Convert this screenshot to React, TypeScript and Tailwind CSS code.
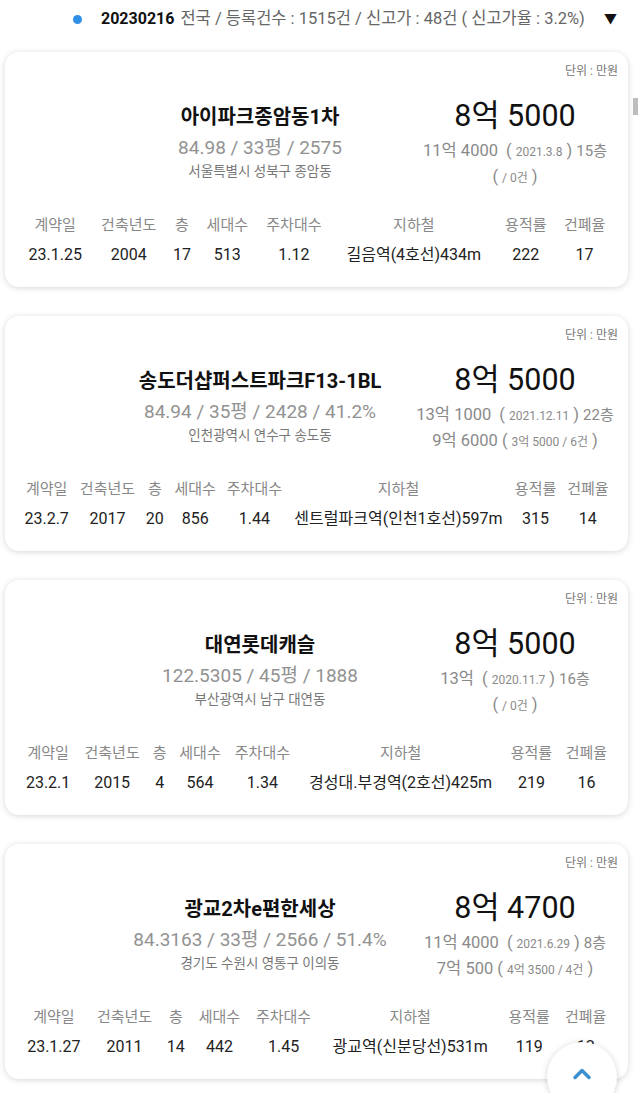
import { ChevronUp } from 'lucide-react';

type Deal = {
  name: string;
  spec: string;
  address: string;
  price: string;
  high: string;
  highDate: string;
  highFloor: string;
  low: string;
  lowNote: string;
  row: string[];
};

const DEALS: Deal[] = [
  {
    name: '아이파크종암동1차',
    spec: '84.98 / 33평 / 2575',
    address: '서울특별시 성북구 종암동',
    price: '8억 5000',
    high: '11억 4000',
    highDate: '2021.3.8',
    highFloor: '15층',
    low: '',
    lowNote: '/ 0건',
    row: ['23.1.25', '2004', '17', '513', '1.12', '길음역(4호선)434m', '222', '17'],
  },
  {
    name: '송도더샵퍼스트파크F13-1BL',
    spec: '84.94 / 35평 / 2428 / 41.2%',
    address: '인천광역시 연수구 송도동',
    price: '8억 5000',
    high: '13억 1000',
    highDate: '2021.12.11',
    highFloor: '22층',
    low: '9억 6000',
    lowNote: '3억 5000 / 6건',
    row: ['23.2.7', '2017', '20', '856', '1.44', '센트럴파크역(인천1호선)597m', '315', '14'],
  },
  {
    name: '대연롯데캐슬',
    spec: '122.5305 / 45평 / 1888',
    address: '부산광역시 남구 대연동',
    price: '8억 5000',
    high: '13억',
    highDate: '2020.11.7',
    highFloor: '16층',
    low: '',
    lowNote: '/ 0건',
    row: ['23.2.1', '2015', '4', '564', '1.34', '경성대.부경역(2호선)425m', '219', '16'],
  },
  {
    name: '광교2차e편한세상',
    spec: '84.3163 / 33평 / 2566 / 51.4%',
    address: '경기도 수원시 영통구 이의동',
    price: '8억 4700',
    high: '11억 4000',
    highDate: '2021.6.29',
    highFloor: '8층',
    low: '7억 500',
    lowNote: '4억 3500 / 4건',
    row: ['23.1.27', '2011', '14', '442', '1.45', '광교역(신분당선)531m', '119', '12'],
  },
];

const HEADS = ['계약일', '건축년도', '층', '세대수', '주차대수', '지하철', '용적률', '건폐율'];

function DealCard({ d }: { d: Deal }) {
  return (
    <div className="bg-white rounded-[14px] shadow-[0_1px_6px_rgba(0,0,0,0.16)] pt-[10px] pb-[17px] px-[8px]">
      <div className="text-right text-[12px] leading-[18px] text-[#777] pr-[2px]">단위 : 만원</div>

      <div className="flex justify-end mt-[18px]">
        <div className="w-[300px] flex flex-col items-center text-center pt-[4px]">
          <div className="text-[20px] leading-[30px] font-bold text-[#111] whitespace-nowrap">{d.name}</div>
          <div className="mt-[4px] text-[19px] leading-[24px] text-[#929292] whitespace-nowrap">{d.spec}</div>
          <div className="text-[13.5px] leading-[22px] text-[#777] whitespace-nowrap">{d.address}</div>
        </div>
        <div className="w-[210px] flex flex-col items-center text-center">
          <div className="text-[30.5px] leading-[36px] text-[#111]">{d.price}</div>
          <div className="mt-[5px] text-[16.5px] leading-[24px] text-[#8a8a8a] whitespace-nowrap">
            {d.high} <span className="mx-[4px]">(</span>
            <span className="text-[12px]">{d.highDate}</span>
            <span className="mx-[4px]">)</span>
            <span className="text-[15px]">{d.highFloor}</span>
          </div>
          <div className="text-[16.5px] leading-[25px] text-[#8a8a8a] whitespace-nowrap">
            {d.low && <span>{d.low} </span>}(
            <span className="text-[12px] mx-[4px]">{d.lowNote}</span>)
          </div>
        </div>
      </div>

      <table className="w-[calc(100%-12px)] mx-[6px] mt-[19px] text-center">
        <thead>
          <tr>
            {HEADS.map((h) => (
              <th key={h} className="font-normal text-[15px] leading-[30px] text-[#888] px-[5px] whitespace-nowrap">
                {h}
              </th>
            ))}
          </tr>
        </thead>
        <tbody>
          <tr>
            {d.row.map((v, i) => (
              <td key={i} className="text-[16px] leading-[30px] text-[#222] px-[5px] whitespace-nowrap">
                {v}
              </td>
            ))}
          </tr>
        </tbody>
      </table>
    </div>
  );
}

export default function App() {
  return (
    <div
      className="relative min-h-[1093px] bg-white overflow-hidden"
      style={{ fontFamily: 'Roboto, "Noto Sans CJK KR", sans-serif' }}
    >
      {/* Summary bar */}
      <div className="h-[38px] flex items-center pl-[73px] pr-[24px]">
        <span className="w-[9px] h-[9px] rounded-full bg-[#2f8fe6] mr-[19px]" />
        <span className="text-[16px] font-bold text-[#111] mr-[6px]">20230216</span>
        <span className="text-[16.5px] text-[#666] whitespace-nowrap">전국 / 등록건수 : 1515건 / 신고가 : 48건 ( 신고가율 : 3.2%)</span>
        <span className="ml-auto text-[13px] text-[#111]">▼</span>
      </div>

      <div className="flex flex-col gap-[29px] pt-[14px] pl-[5px] pr-[13px] pb-[40px]">
        {DEALS.map((d) => (
          <DealCard key={d.name} d={d} />
        ))}
      </div>

      {/* scrollbar thumb */}
      <div className="absolute left-[633px] top-[98px] w-[5px] h-[17px] bg-[#bdbdbd]" />

      {/* back to top */}
      <button className="fixed left-[547px] top-[1042px] w-[70px] h-[70px] rounded-full bg-white shadow-[0_1px_6px_rgba(0,0,0,0.18)] flex justify-center pt-[18px]">
        <ChevronUp className="w-[28px] h-[28px] text-[#3a8fd1]" strokeWidth={3} />
      </button>
    </div>
  );
}
